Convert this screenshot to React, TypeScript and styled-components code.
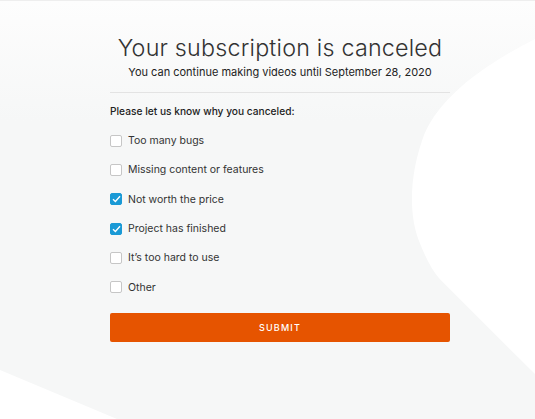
import React, { useState } from 'react';
import styled, { createGlobalStyle } from 'styled-components';

const GlobalStyle = createGlobalStyle`
  html, body {
    margin: 0;
    padding: 0;
  }
  body {
    font-family: Inter, "Noto Sans", sans-serif;
    color: #222;
  }
`;

const Page = styled.div`
  position: relative;
  width: 535px;
  height: 419px;
  overflow: hidden;
  background: linear-gradient(to bottom, #fdfdfd 0px, #f6f7f7 120px, #f6f7f7 100%);
  border-top: 1px solid #eeeeee;
  box-sizing: border-box;
`;

const Backdrop = styled.svg`
  position: absolute;
  inset: 0;
  width: 100%;
  height: 100%;
`;

const Content = styled.div`
  position: relative;
  width: 340px;
  margin-left: 110px;
  padding-top: 33px;
  display: flex;
  flex-direction: column;
  align-items: center;
`;

const Title = styled.h1`
  margin: 0;
  font-size: 23.3px;
  font-weight: 300;
  color: #333;
  letter-spacing: 0.2px;
  line-height: 28px;
`;

const Subtitle = styled.p`
  margin: 3px 0 0;
  font-size: 11px;
  color: #222;
  line-height: 14px;
`;

const Divider = styled.hr`
  align-self: stretch;
  border: none;
  border-top: 1px solid #e3e3e3;
  margin: 13px 0 0;
`;

const Form = styled.form`
  align-self: stretch;
  display: flex;
  flex-direction: column;
  padding-top: 11px;
`;

const Question = styled.div`
  font-size: 10.2px;
  font-weight: 500;
  color: #222;
  line-height: 14px;
  margin-bottom: 8px;
`;

const Option = styled.label`
  display: flex;
  align-items: center;
  gap: 6px;
  height: 29.3px;
  font-size: 10.5px;
  color: #333;
  cursor: pointer;
`;

const Box = styled.span<{ $checked: boolean }>`
  width: 12px;
  height: 12px;
  box-sizing: border-box;
  border-radius: 2px;
  border: 1px solid ${p => (p.$checked ? '#1a9ad6' : '#c6c6c6')};
  background: ${p => (p.$checked ? '#1a9ad6' : '#fff')};
  display: flex;
  align-items: center;
  justify-content: center;
`;

const Submit = styled.button`
  margin-top: 11px;
  height: 29px;
  border: none;
  border-radius: 2px;
  background: #e65400;
  color: #fff;
  font-family: Inter, "Noto Sans", sans-serif;
  font-size: 9px;
  font-weight: 500;
  letter-spacing: 1.2px;
  cursor: pointer;
`;

const reasons = [
  'Too many bugs',
  'Missing content or features',
  'Not worth the price',
  'Project has finished',
  'It\u2019s too hard to use',
  'Other',
];

export default function App() {
  const [checked, setChecked] = useState<boolean[]>([false, false, true, true, false, false]);

  const toggle = (i: number) => {
    setChecked(c => c.map((v, j) => (j === i ? !v : v)));
  };

  return (
    <Page>
      <GlobalStyle />
      <Backdrop viewBox="0 0 535 419" preserveAspectRatio="none">
        <path d="M535,38 C480,66 435,100 422,140 C410,175 408,215 420,243 C426,258 432,270 440,279 L535,374 Z" fill="#ffffff" />
        <path d="M0,370 L117,419 L0,419 Z" fill="#ffffff" />
      </Backdrop>
      <Content>
        <Title>Your subscription is canceled</Title>
        <Subtitle>You can continue making videos until September 28, 2020</Subtitle>
        <Divider />
        <Form onSubmit={e => e.preventDefault()}>
          <Question>Please let us know why you canceled:</Question>
          {reasons.map((r, i) => (
            <Option key={r} onClick={() => toggle(i)}>
              <Box $checked={checked[i]}>
                {checked[i] && (
                  <svg width="9" height="8" viewBox="0 0 9 8">
                    <path d="M1 4.2 L3.4 6.5 L8 1.2" fill="none" stroke="#fff" strokeWidth="1.3" />
                  </svg>
                )}
              </Box>
              {r}
            </Option>
          ))}
          <Submit type="submit">SUBMIT</Submit>
        </Form>
      </Content>
    </Page>
  );
}
